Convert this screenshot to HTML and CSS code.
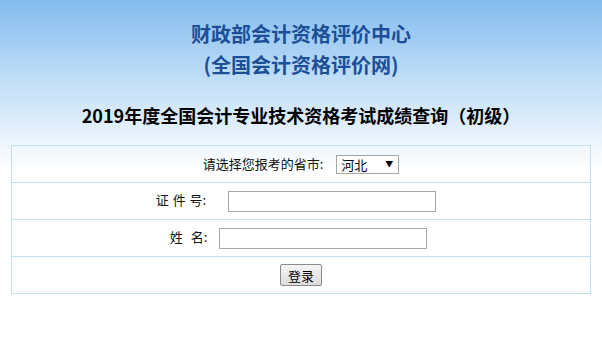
FILE: index.html
```html
<!DOCTYPE html>
<html lang="zh-CN">
<head>
    <meta charset="UTF-8">
    <title>成绩查询</title>
    <link rel="stylesheet" href="styles.css">
</head>
<body>
    <div class="header">
        <h1>财政部会计资格评价中心<br>(全国会计资格评价网)</h1>
        <h2>2019年度全国会计专业技术资格考试成绩查询（初级）</h2>
    </div>

    <table class="query">
        <tr>
            <td>请选择您报考的省市:
                <span class="select-wrap">
                    <select>
                        <option>河北</option>
                    </select>
                </span>
            </td>
        </tr>
        <tr>
            <td><span class="label id-label">证 件 号:</span><input type="text" class="id-input"></td>
        </tr>
        <tr>
            <td><span class="label name-label">姓 名:</span><input type="text" class="name-input"></td>
        </tr>
        <tr>
            <td><button type="button" class="btn">登录</button></td>
        </tr>
    </table>
</body>
</html>
```

FILE: styles.css
```css
body {
    font-family: "Noto Sans CJK SC", "Liberation Sans", sans-serif;
    margin: 0;
    padding: 0;
    background: #fff linear-gradient(#83bbef 0, #b9daf6 70px, #fff 170px) no-repeat;
    background-size: 100% 170px;
}

.header {
    text-align: center;
    padding-top: 18px;
}

h1 {
    font-size: 20px;
    line-height: 31px;
    color: #1d4f96;
    margin: 0;
}

h2 {
    font-size: 18px;
    line-height: 30px;
    color: #000;
    margin: 20px 0 0;
}

.query {
    width: 580px;
    margin: 15px auto 0;
    border-collapse: collapse;
    font-size: 13px;
    color: #111;
}

.query td {
    border: 1px solid #c0e1f3;
    height: 36px;
    padding: 0;
    text-align: center;
    vertical-align: middle;
}

.label {
    word-spacing: 1px;
}

.id-label {
    margin-right: 22px;
}

.name-label {
    word-spacing: 5px;
    margin-right: 12px;
}

.select-wrap {
    position: relative;
    display: inline-block;
    margin-left: 10px;
    vertical-align: middle;
}

.select-wrap select {
    appearance: none;
    -webkit-appearance: none;
    width: 63px;
    height: 19px;
    border: 1px solid #a6a6a6;
    border-radius: 0;
    background: #fff;
    font-family: inherit;
    font-size: 13px;
    padding: 0 0 0 4px;
    line-height: 17px;
    color: #000;
}

.select-wrap::after {
    content: "▼";
    position: absolute;
    right: 6px;
    top: 4px;
    font-size: 8px;
    line-height: 10px;
    color: #000;
    pointer-events: none;
}

input[type="text"] {
    width: 208px;
    height: 21px;
    box-sizing: border-box;
    border: 1px solid #a9a9a9;
    vertical-align: middle;
    padding: 0 2px;
}

.id-input {
    margin-right: 10px;
}

.name-input {
    margin-right: 5px;
}

.btn {
    width: 42px;
    height: 22px;
    border: 1px solid #8a8a8a;
    border-radius: 2px;
    background: linear-gradient(#f4f4f4, #dcdcdc);
    font-family: inherit;
    font-size: 13px;
    padding: 0;
    color: #000;
}
```
